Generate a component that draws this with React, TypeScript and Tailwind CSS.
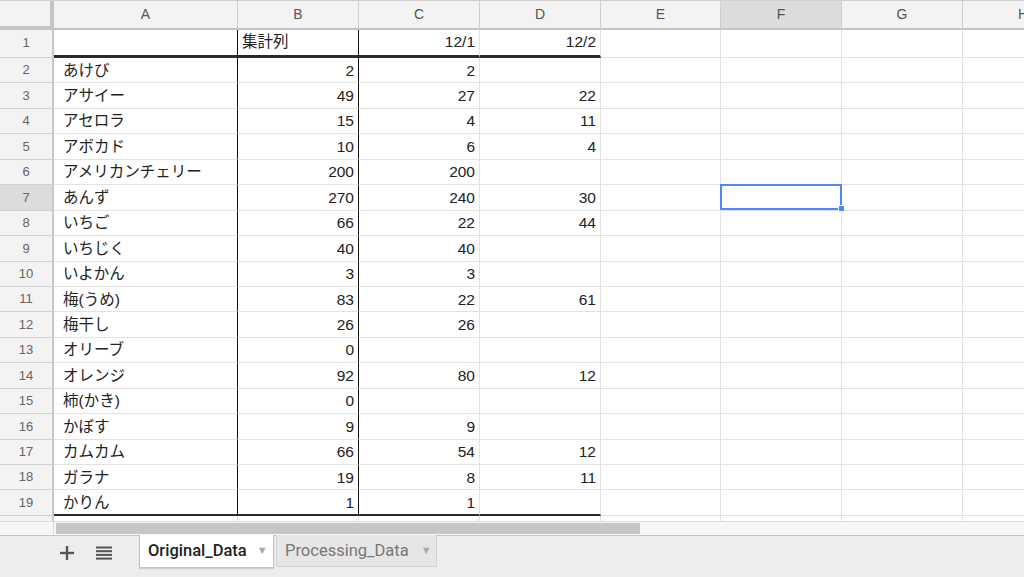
import React from "react";

type Row = { n: number; a: string; b: string; c: string; d: string };

const rows: Row[] = [
  { n: 2, a: "あけび", b: "2", c: "2", d: "" },
  { n: 3, a: "アサイー", b: "49", c: "27", d: "22" },
  { n: 4, a: "アセロラ", b: "15", c: "4", d: "11" },
  { n: 5, a: "アボカド", b: "10", c: "6", d: "4" },
  { n: 6, a: "アメリカンチェリー", b: "200", c: "200", d: "" },
  { n: 7, a: "あんず", b: "270", c: "240", d: "30" },
  { n: 8, a: "いちご", b: "66", c: "22", d: "44" },
  { n: 9, a: "いちじく", b: "40", c: "40", d: "" },
  { n: 10, a: "いよかん", b: "3", c: "3", d: "" },
  { n: 11, a: "梅(うめ)", b: "83", c: "22", d: "61" },
  { n: 12, a: "梅干し", b: "26", c: "26", d: "" },
  { n: 13, a: "オリーブ", b: "0", c: "", d: "" },
  { n: 14, a: "オレンジ", b: "92", c: "80", d: "12" },
  { n: 15, a: "柿(かき)", b: "0", c: "", d: "" },
  { n: 16, a: "かぼす", b: "9", c: "9", d: "" },
  { n: 17, a: "カムカム", b: "66", c: "54", d: "12" },
  { n: 18, a: "ガラナ", b: "19", c: "8", d: "11" },
  { n: 19, a: "かりん", b: "1", c: "1", d: "" },
];

const letters = ["A", "B", "C", "D", "E", "F", "G", "H"];
const colW = [
  "w-[184px]",
  "w-[121px]",
  "w-[121px]",
  "w-[121px]",
  "w-[120px]",
  "w-[121px]",
  "w-[121px]",
  "w-[121px]",
];

const cellFont = "font-['Liberation_Sans','Noto_Sans_CJK_JP',sans-serif] text-[15.5px] text-[#222]";

function EmptyCells({ from, h, bottom }: { from: number; h: string; bottom: string }) {
  return (
    <>
      {colW.slice(from).map((w, i) => (
        <div key={i} className={`${w} ${h} shrink-0 border-r border-[#e2e2e2] ${bottom}`} />
      ))}
    </>
  );
}

function DataRow({ r }: { r: Row }) {
  const last = r.n === 19;
  const bb = last ? "border-b-2 border-b-[#2a2a2a]" : "border-b border-b-[#e2e2e2]";
  const sel = r.n === 7;
  return (
    <div className="flex h-[25.44px]">
      <div
        className={`w-[54px] shrink-0 flex items-center justify-center border-r-2 border-r-[#c8c8c8] border-b border-b-[#d0d0d0] text-[13px] text-[#666] font-['Liberation_Sans',sans-serif] ${
          sel ? "bg-[#dcdcdc]" : "bg-[#f3f3f3]"
        }`}
      >
        {r.n}
      </div>
      <div className={`${colW[0]} shrink-0 flex items-center pl-[9px] border-r-[1.5px] border-r-[#111] ${bb} ${cellFont}`}>
        {r.a}
      </div>
      <div className={`${colW[1]} shrink-0 flex items-center justify-end pr-[4px] border-r-[1.5px] border-r-[#111] ${bb} ${cellFont}`}>
        {r.b}
      </div>
      <div className={`${colW[2]} shrink-0 flex items-center justify-end pr-[4px] border-r border-r-[#e2e2e2] ${bb} ${cellFont}`}>
        {r.c}
      </div>
      <div className={`${colW[3]} shrink-0 flex items-center justify-end pr-[4px] border-r border-r-[#e2e2e2] ${bb} ${cellFont}`}>
        {r.d}
      </div>
      <EmptyCells from={4} h="h-full" bottom="border-b border-b-[#e2e2e2]" />
    </div>
  );
}

export default function App() {
  return (
    <div className="relative w-[1024px] h-[577px] overflow-hidden bg-white flex flex-col">
      {/* Column header */}
      <div className="flex h-[30px] shrink-0 border-t border-t-[#d0d0d0]">
        <div className="w-[54px] shrink-0 bg-[#f3f3f3] border-r-[4px] border-b-[4px] border-[#c4c4c4]" />
        {letters.map((l, i) => (
          <div
            key={l}
            className={`${colW[i]} shrink-0 flex items-center justify-center border-r border-r-[#cfcfcf] border-b-2 border-b-[#c4c4c4] text-[14px] text-[#555] font-['Liberation_Sans',sans-serif] ${
              l === "F" ? "bg-[#dcdcdc]" : "bg-[#f3f3f3]"
            }`}
          >
            {l}
          </div>
        ))}
      </div>

      {/* Row 1 */}
      <div className="flex h-[28px] shrink-0">
        <div className="w-[54px] shrink-0 flex items-center justify-center pb-[2px] bg-[#f3f3f3] border-r-2 border-r-[#c8c8c8] border-b border-b-[#d0d0d0] text-[13px] text-[#666] font-['Liberation_Sans',sans-serif]">
          1
        </div>
        <div className={`${colW[0]} shrink-0 border-r-[1.5px] border-r-[#111] border-b-[3px] border-b-[#2a2a2a]`} />
        <div className={`${colW[1]} shrink-0 flex items-center pl-[4px] pb-[2px] border-r-[1.5px] border-r-[#111] border-b-[3px] border-b-[#2a2a2a] ${cellFont}`}>
          集計列
        </div>
        <div className={`${colW[2]} shrink-0 flex items-center justify-end pr-[4px] pb-[2px] border-r border-r-[#e2e2e2] border-b-[3px] border-b-[#2a2a2a] ${cellFont}`}>
          12/1
        </div>
        <div className={`${colW[3]} shrink-0 flex items-center justify-end pr-[4px] pb-[2px] border-r border-r-[#e2e2e2] border-b-[3px] border-b-[#2a2a2a] ${cellFont}`}>
          12/2
        </div>
        <EmptyCells from={4} h="h-full" bottom="border-b border-b-[#e2e2e2]" />
      </div>

      {rows.map((r) => (
        <DataRow key={r.n} r={r} />
      ))}

      {/* partial row 20 */}
      <div className="flex h-[5px] shrink-0">
        <div className="w-[54px] shrink-0 bg-[#f3f3f3] border-r-2 border-r-[#c8c8c8]" />
        <EmptyCells from={0} h="h-full" bottom="" />
      </div>

      {/* Horizontal scrollbar */}
      <div className="flex h-[14px] shrink-0 border-t border-t-[#dadada]">
        <div className="w-[54px] shrink-0 bg-[#f7f7f7] border-r border-r-[#dadada]" />
        <div className="flex-1 bg-[#f7f7f7] pl-[2px] pt-[1px]">
          <div className="w-[584px] h-[11px] bg-[#c6c6c6]" />
        </div>
      </div>

      {/* Sheet tabs bar */}
      <div className="flex flex-1 items-start bg-[#ededed] border-t border-t-[#c4c4c4]">
        <div className="flex items-center h-[34px] pl-[60px]">
          <svg width="14" height="14" viewBox="0 0 14 14" className="shrink-0">
            <rect x="5.8" y="0" width="2.4" height="14" fill="#555" />
            <rect x="0" y="5.8" width="14" height="2.4" fill="#555" />
          </svg>
          <svg width="16" height="14" viewBox="0 0 16 14" className="ml-[22px] shrink-0">
            <rect x="0" y="0.5" width="16" height="2" fill="#555" />
            <rect x="0" y="4.2" width="16" height="2" fill="#555" />
            <rect x="0" y="7.9" width="16" height="2" fill="#555" />
            <rect x="0" y="11.6" width="16" height="2" fill="#555" />
          </svg>
        </div>
        <div className="ml-[27px] -mt-px flex">
          <div className="w-[135px] h-[33px] flex items-center pl-[8px] bg-white border border-t-0 border-[#c4c4c4] shadow-[0_1px_1px_rgba(0,0,0,0.12)] font-['Roboto','Liberation_Sans',sans-serif] text-[16.5px] font-medium text-[#222]">
            <span>Original_Data</span>
            <span className="ml-[10px] text-[11px] text-[#aaa]">▼</span>
          </div>
          <div className="ml-[2px] w-[161px] h-[32px] flex items-center pl-[8px] pt-[2px] bg-[#e6e6e6] border border-t-0 border-[#d2d2d2] font-['Roboto','Liberation_Sans',sans-serif] text-[16.5px] text-[#777]">
            <span>Processing_Data</span>
            <span className="ml-[12px] text-[11px] text-[#aaa]">▼</span>
          </div>
        </div>
      </div>

      {/* Selection on F7 */}
      <div className="absolute left-[720px] top-[184px] w-[122px] h-[26px] border-2 border-[#4a8af4] pointer-events-none" />
      <div className="absolute left-[838px] top-[205px] w-[7px] h-[7px] bg-[#4a8af4] border border-white" />
    </div>
  );
}
